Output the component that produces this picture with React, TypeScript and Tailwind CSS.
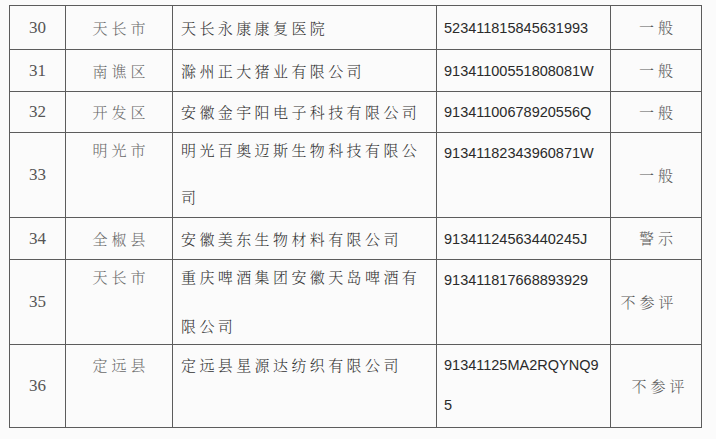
const cjk = "font-['Noto_Serif_CJK_SC','Noto_Sans_CJK_SC',serif]";

type Row = {
  no: string;
  area: string;
  name: string[];
  code: string[];
  rating: string;
  h: string;
  pt?: string;
  gap?: string;
  ratingCls?: string;
};

const rows: Row[] = [
  { no: "30", area: "天长市", name: ["天长永康康复医院"], code: ["523411815845631993"], rating: "一般", h: "h-[44px]" },
  { no: "31", area: "南谯区", name: ["滁州正大猪业有限公司"], code: ["91341100551808081W"], rating: "一般", h: "h-[42px]" },
  { no: "32", area: "开发区", name: ["安徽金宇阳电子科技有限公司"], code: ["91341100678920556Q"], rating: "一般", h: "h-[41px]" },
  {
    no: "33",
    area: "明光市",
    name: ["明光百奥迈斯生物科技有限公", "司"],
    code: ["91341182343960871W"],
    rating: "一般",
    h: "h-[85px]",
    pt: "pt-[7px]",
    gap: "gap-[27px]",
  },
  { no: "34", area: "全椒县", name: ["安徽美东生物材料有限公司"], code: ["91341124563440245J"], rating: "警示", h: "h-[42px]" },
  {
    no: "35",
    area: "天长市",
    name: ["重庆啤酒集团安徽天岛啤酒有", "限公司"],
    code: ["913411817668893929"],
    rating: "不参评",
    h: "h-[85px]",
    pt: "pt-[7px]",
    gap: "gap-[29px]",
    ratingCls: "pr-[14px]",
  },
  {
    no: "36",
    area: "定远县",
    name: ["定远县星源达纺织有限公司"],
    code: ["91341125MA2RQYNQ9", "5"],
    rating: "不参评",
    h: "h-[83px]",
    pt: "pt-[10px]",
    gap: "gap-[20px]",
    ratingCls: "pl-[8px]",
  },
];

export default function App() {
  return (
    <div className="w-[716px] h-[439px] bg-[#fbfbfb] pt-[5px] pl-[9px] overflow-hidden">
      <table className="border-collapse table-fixed w-[692px]">
        <colgroup>
          <col className="w-[56px]" />
          <col className="w-[107px]" />
          <col className="w-[264px]" />
          <col className="w-[174px]" />
          <col className="w-[91px]" />
        </colgroup>
        <tbody>
          {rows.map((r) => {
            const tall = r.name.length > 1 || r.code.length > 1;
            const topCls = tall ? `align-top ${r.pt}` : "align-middle";
            return (
              <tr key={r.no} className={r.h}>
                <td className="border border-[#5c5c5c] text-center align-middle font-['Liberation_Serif',serif] text-[17px] text-[#555]">
                  {r.no}
                </td>
                <td
                  className={`border border-[#5c5c5c] text-center ${topCls} ${cjk} font-light text-[15px] leading-[20px] tracking-[4px] pl-[4px] text-[#6a6a6a]`}
                >
                  {r.area}
                </td>
                <td className={`border border-[#5c5c5c] ${topCls} pl-[8px] ${cjk} font-light text-[15px] leading-[20px] tracking-[3.4px] text-[#333] whitespace-nowrap`}>
                  <div className={`flex flex-col ${r.gap ?? ""}`}>
                    {r.name.map((l) => (
                      <span key={l}>{l}</span>
                    ))}
                  </div>
                </td>
                <td className={`border border-[#5c5c5c] ${topCls} pl-[7px] font-['Liberation_Sans',sans-serif] text-[14.5px] leading-[20px] text-[#2a2a2a] whitespace-nowrap`}>
                  <div className={`flex flex-col ${r.code.length > 1 ? r.gap : ""} ${r.name.length > 1 ? "pt-[3px]" : ""}`}>
                    {r.code.map((l) => (
                      <span key={l}>{l}</span>
                    ))}
                  </div>
                </td>
                <td
                  className={`border border-[#5c5c5c] text-center align-middle ${cjk} font-light text-[15px] tracking-[4px] text-[#5a5a5a] ${r.ratingCls ?? "pl-[4px]"}`}
                >
                  {r.rating}
                </td>
              </tr>
            );
          })}
        </tbody>
      </table>
    </div>
  );
}
